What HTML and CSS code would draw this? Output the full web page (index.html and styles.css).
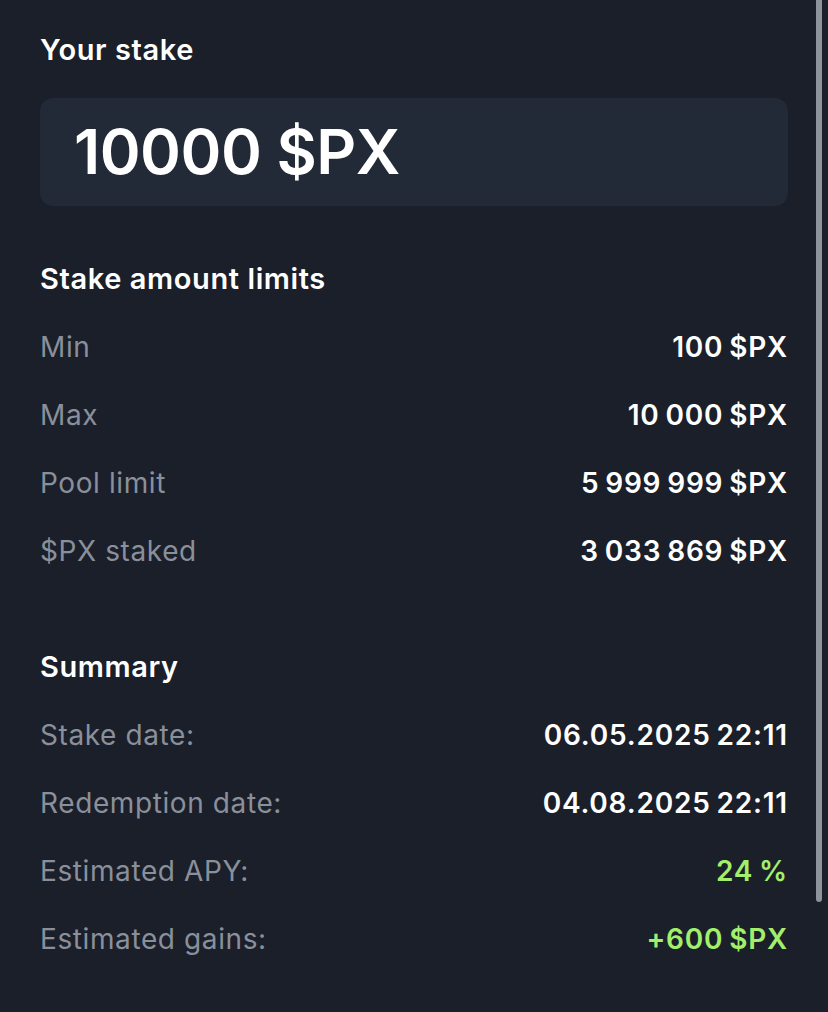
FILE: index.html
```html
<!DOCTYPE html>
<html lang="en">
<head>
<meta charset="utf-8">
<title>Stake</title>
<link rel="stylesheet" href="styles.css">
</head>
<body>
<main class="panel">
  <h2 class="title">Your stake</h2>
  <div class="stake-box"><span class="stake-value">10000 $PX</span></div>

  <section class="section limits">
    <h3 class="section-title">Stake amount limits</h3>
    <div class="row"><span class="label">Min</span><span class="value">100 $PX</span></div>
    <div class="row"><span class="label">Max</span><span class="value">10 000 $PX</span></div>
    <div class="row"><span class="label">Pool limit</span><span class="value">5 999 999 $PX</span></div>
    <div class="row"><span class="label">$PX staked</span><span class="value">3 033 869 $PX</span></div>
  </section>

  <section class="section summary">
    <h3 class="section-title">Summary</h3>
    <div class="row"><span class="label">Stake date:</span><span class="value">06.05.2025 22:11</span></div>
    <div class="row"><span class="label">Redemption date:</span><span class="value">04.08.2025 22:11</span></div>
    <div class="row"><span class="label">Estimated APY:</span><span class="value green">24 %</span></div>
    <div class="row"><span class="label">Estimated gains:</span><span class="value green">+600 $PX</span></div>
  </section>
</main>
<div class="scrollbar"></div>
</body>
</html>
```
FILE: styles.css
```css
html, body {
  margin: 0;
  padding: 0;
  background: #1a1f2a;
  height: 100%;
  overflow: hidden;
}
body {
  font-family: Inter, "Open Sans", "Liberation Sans", sans-serif;
  color: #ffffff;
}
.panel {
  padding: 30px 40px 0 40px;
  width: 748px;
}
.title {
  margin: 0;
  font-size: 29px;
  font-weight: 600;
  line-height: 40px;
  letter-spacing: 0.6px;
}
.stake-box {
  margin-top: 28px;
  height: 108px;
  background: #222937;
  border-radius: 13px;
  display: flex;
  align-items: center;
  padding-left: 34px;
}
.stake-value {
  font-size: 62px;
  font-weight: 600;
  letter-spacing: -0.5px;
  line-height: 1;
}
.section-title {
  margin: 0 0 14px 0;
  font-size: 29px;
  font-weight: 600;
  line-height: 40px;
  letter-spacing: 0.6px;
}
.limits { margin-top: 53px; }
.summary { margin-top: 62px; }
.row {
  display: flex;
  justify-content: space-between;
  align-items: center;
  height: 68px;
  font-size: 28px;
}
.label {
  color: #8a909b;
  font-weight: 400;
  letter-spacing: 0.6px;
}
.value {
  font-weight: 600;
  color: #ffffff;
  letter-spacing: 0.8px;
  word-spacing: -2px;
}
.green { color: #a2ef6b; }
.scrollbar {
  position: absolute;
  top: 0;
  left: 816px;
  width: 6px;
  height: 902px;
  background: #8d929b;
  border-radius: 0 0 3px 3px;
}
```
